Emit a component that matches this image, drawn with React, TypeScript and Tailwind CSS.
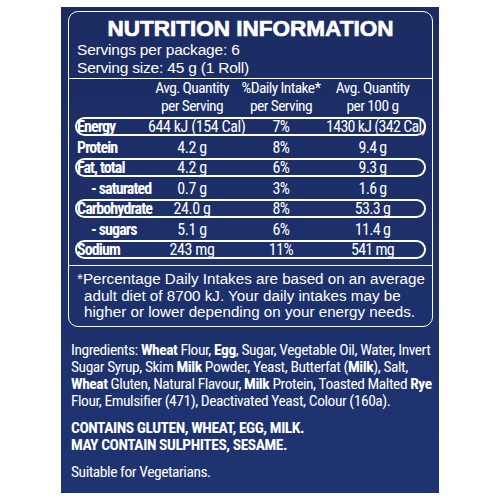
type Row = {
  label: string
  perServe: string
  daily: string
  per100: string
  pill?: boolean
  sub?: boolean
}

const rows: Row[] = [
  { label: "Energy", perServe: "644 kJ (154 Cal)", daily: "7%", per100: "1430 kJ (342 Cal)", pill: true },
  { label: "Protein", perServe: "4.2 g", daily: "8%", per100: "9.4 g" },
  { label: "Fat, total", perServe: "4.2 g", daily: "6%", per100: "9.3 g", pill: true },
  { label: "- saturated", perServe: "0.7 g", daily: "3%", per100: "1.6 g", sub: true },
  { label: "Carbohydrate", perServe: "24.0 g", daily: "8%", per100: "53.3 g", pill: true },
  { label: "- sugars", perServe: "5.1 g", daily: "6%", per100: "11.4 g", sub: true },
  { label: "Sodium", perServe: "243 mg", daily: "11%", per100: "541 mg", pill: true },
]

function NutrientRow({ row }: { row: Row }) {
  return (
    <div
      className={`mx-[6px] h-[19px] pb-[2px] grid grid-cols-[71px_88px_90px_97px] items-center rounded-full border-2 leading-[15px] ${
        row.pill ? "border-white" : "border-transparent"
      }`}
    >
      <span className={`font-bold tracking-[-0.9px] whitespace-nowrap ${row.sub ? "pl-[14px]" : "pl-[0px]"}`}>
        {row.label}
      </span>
      <span className="text-center whitespace-nowrap tracking-[-0.4px]">{row.perServe}</span>
      <span className="text-center whitespace-nowrap tracking-[-0.4px]">{row.daily}</span>
      <span className="text-center whitespace-nowrap tracking-[-0.7px] pr-[4px]">{row.per100}</span>
    </div>
  )
}

export default function App() {
  return (
    <div className="w-[500px] h-[500px] bg-white pt-[7px] pl-[61px]">
      <div className="w-[378px] h-[486px] bg-linear-to-b from-[#1b2c63] to-[#1e3471] text-white pt-[4px] pl-[7px]">
        {/* Nutrition panel */}
        <div className="w-[365px] h-[316px] rounded-[10px] border-[1.5px] border-white overflow-hidden">
          <div className="font-['Liberation_Sans'] px-[8px]">
            <div className="pt-[4px] text-center font-bold text-[22.5px] leading-[25px] [-webkit-text-stroke:0.7px_white]">
              NUTRITION INFORMATION
            </div>
            <div className="text-[15.5px] leading-[18px] tracking-[-0.2px]">Servings per package: 6</div>
            <div className="text-[15.5px] leading-[18px] tracking-[-0.2px]">Serving size: 45 g (1 Roll)</div>
          </div>
          <div className="mt-[1px] border-t-[1.5px] border-white" />

          <div className="font-['Roboto_Condensed'] text-[16px]">
            <div className="mx-[6px] px-[2px] grid grid-cols-[71px_88px_90px_97px] text-[15.5px] leading-[18px] tracking-[-0.6px] text-center">
              <span />
              <span className="whitespace-nowrap">
                Avg. Quantity
                <br />
                per Serving
              </span>
              <span className="whitespace-nowrap">
                %Daily Intake*
                <br />
                per Serving
              </span>
              <span className="whitespace-nowrap pr-[4px]">
                Avg. Quantity
                <br />
                per 100 g
              </span>
            </div>
            <div className="mt-[2px] flex flex-col gap-[1.5px]">
              {rows.map((r) => (
                <NutrientRow key={r.label} row={r} />
              ))}
            </div>
          </div>

          <div className="mt-[6px] border-t-[1.5px] border-white" />
          <div className="font-['Liberation_Sans'] text-[15.2px] leading-[16.5px] pt-[5px] pl-[8px]">
            <div>*Percentage Daily Intakes are based on an average</div>
            <div className="pl-[7px]">adult diet of 8700 kJ. Your daily intakes may be</div>
            <div className="pl-[7px]">higher or lower depending on your energy needs.</div>
          </div>
        </div>

        {/* Ingredients */}
        <div className="font-['Roboto_Condensed'] text-[15.5px] leading-[17px] tracking-[-0.45px] whitespace-nowrap pl-[3px] pt-[15px]">
          <p>
            Ingredients: <b>Wheat</b> Flour, <b>Egg</b>, Sugar, Vegetable Oil, Water, Invert
            <br />
            Sugar Syrup, Skim <b>Milk</b> Powder, Yeast, Butterfat (<b>Milk</b>), Salt,
            <br />
            <b>Wheat</b> Gluten, Natural Flavour, <b>Milk</b> Protein, Toasted Malted <b>Rye</b>
            <br />
            Flour, Emulsifier (471), Deactivated Yeast, Colour (160a).
          </p>
          <p className="mt-[10px] font-bold">
            CONTAINS GLUTEN, WHEAT, EGG, MILK.
            <br />
            MAY CONTAIN SULPHITES, SESAME.
          </p>
          <p className="mt-[10px]">Suitable for Vegetarians.</p>
        </div>
      </div>
    </div>
  )
}
